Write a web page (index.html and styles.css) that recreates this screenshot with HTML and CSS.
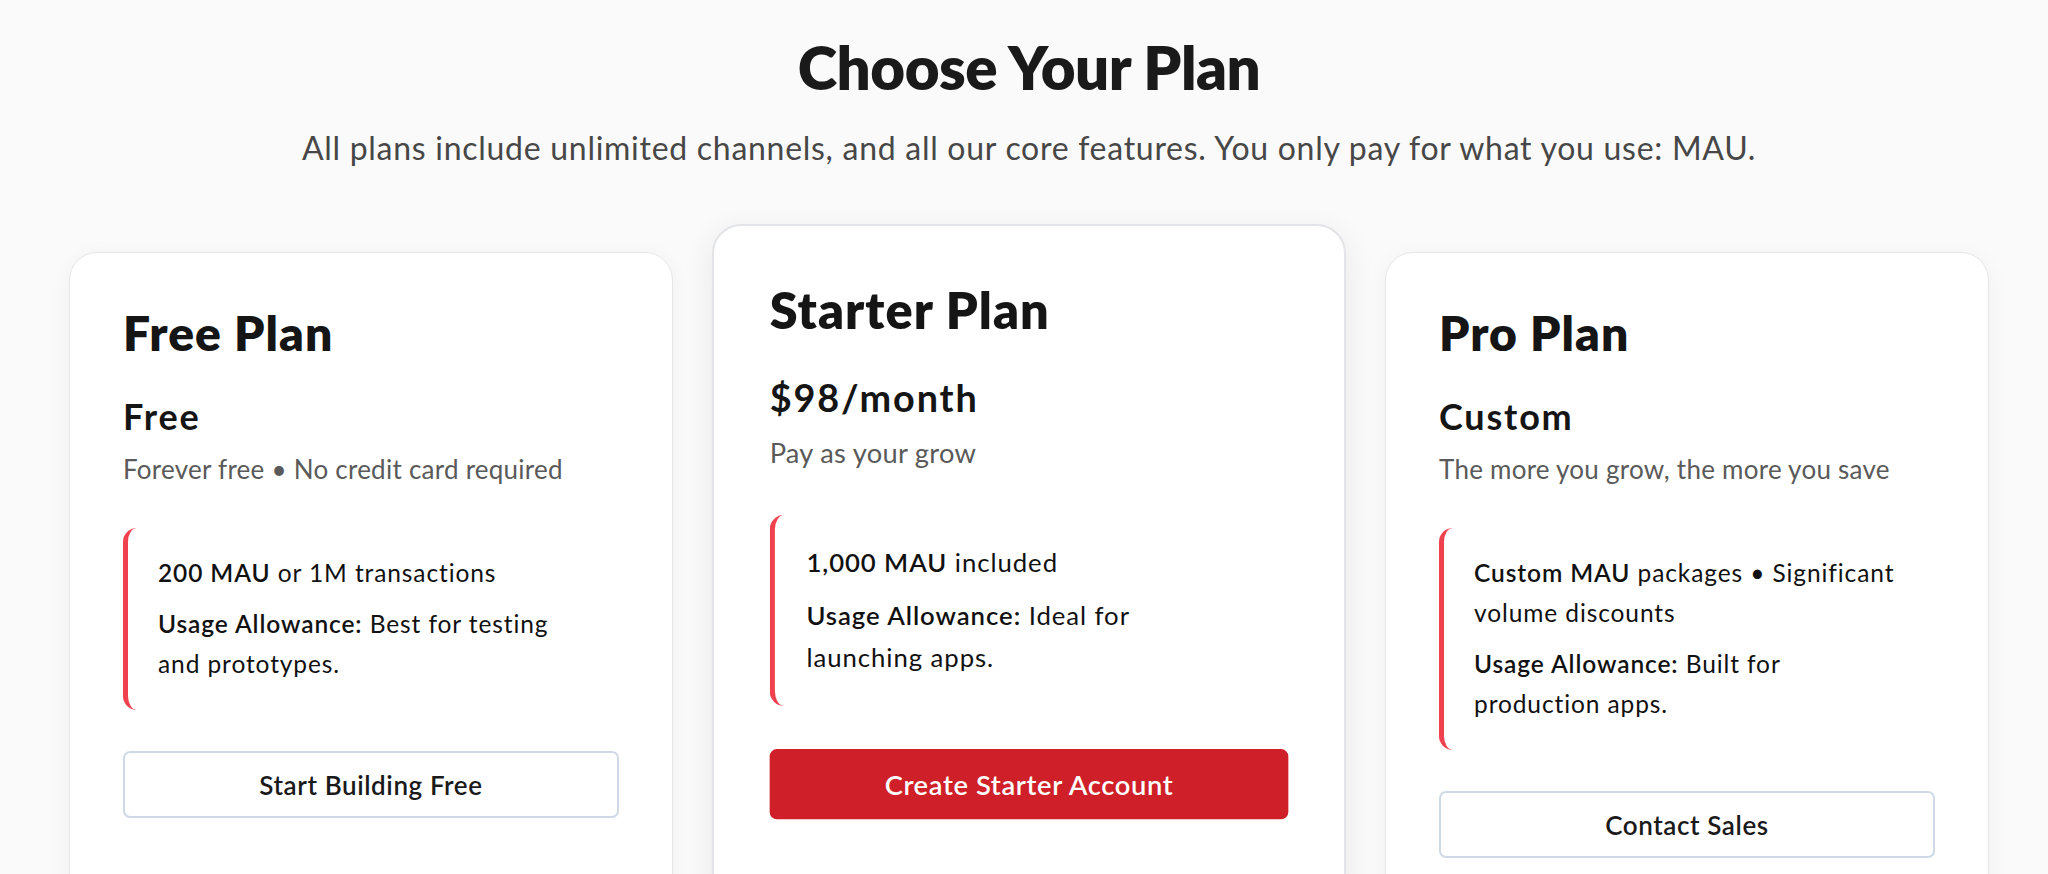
FILE: index.html
```html
<!DOCTYPE html>
<html lang="en">
<head>
<meta charset="utf-8">
<title>Choose Your Plan</title>
<link rel="stylesheet" href="styles.css">
</head>
<body>
<main class="page">
  <header class="intro">
    <h1 class="intro-title">Choose Your Plan</h1>
    <p class="intro-text">All plans include unlimited channels, and all our core features. You only pay for what you use: MAU.</p>
  </header>
  <section class="plans">
    <article class="plan">
      <h2 class="plan-name">Free Plan</h2>
      <div class="plan-price">Free</div>
      <p class="plan-note">Forever free • No credit card required</p>
      <div class="plan-features">
        <p><strong>200 MAU</strong> or 1M transactions</p>
        <p><strong>Usage Allowance:</strong> Best for testing and prototypes.</p>
      </div>
      <button class="plan-btn">Start Building Free</button>
    </article>
    <article class="plan plan-featured">
      <h2 class="plan-name">Starter Plan</h2>
      <div class="plan-price">$98/month</div>
      <p class="plan-note">Pay as your grow</p>
      <div class="plan-features">
        <p><strong>1,000 MAU</strong> included</p>
        <p><strong>Usage Allowance:</strong> Ideal for launching apps.</p>
      </div>
      <button class="plan-btn plan-btn-primary">Create Starter Account</button>
    </article>
    <article class="plan">
      <h2 class="plan-name">Pro Plan</h2>
      <div class="plan-price">Custom</div>
      <p class="plan-note">The more you grow, the more you save</p>
      <div class="plan-features">
        <p><strong>Custom MAU</strong> packages • Significant volume discounts</p>
        <p><strong>Usage Allowance:</strong> Built for production apps.</p>
      </div>
      <button class="plan-btn">Contact Sales</button>
    </article>
  </section>
</main>
</body>
</html>
```
FILE: styles.css
```css
* { box-sizing: border-box; }
html, body { margin: 0; padding: 0; }
body {
  background: #fafafa;
  font-family: "Lato", "Noto Sans", sans-serif;
  color: #141414;
}
.page {
  max-width: 1930px;
  margin: 0 auto;
  padding: 31px 0 0 10px;
}
.intro { text-align: center; }
.intro-title {
  margin: 0;
  font-size: 60px;
  line-height: 72px;
  font-weight: 800;
  letter-spacing: -0.5px;
  color: #1a1a1a;
}
.intro-text {
  margin: 21px 0 0;
  font-size: 32px;
  line-height: 48px;
  font-weight: 400;
  letter-spacing: 0.72px;
  color: #474747;
}
.plans {
  margin-top: 80px;
  display: grid;
  grid-template-columns: repeat(3, 1fr);
  gap: 54px;
}
.plan {
  background: #fff;
  border: 1px solid #e6e6e8;
  border-radius: 28px;
  padding: 51px 53px;
  box-shadow: 0 4px 22px rgba(0, 0, 0, 0.045);
  display: flex;
  flex-direction: column;
  align-items: stretch;
}
.plan-featured {
  transform-origin: top center;
  transform: translateY(-28px) scale(1.05);
  border: 2px solid #e3e4e8;
  box-shadow: 0 8px 30px rgba(0, 0, 0, 0.07);
}
.plan-name {
  margin: 0;
  font-size: 48px;
  line-height: 58px;
  font-weight: 800;
  letter-spacing: 1px;
  color: #151515;
}
.plan-price {
  margin-top: 32px;
  font-size: 36px;
  line-height: 44px;
  font-weight: 700;
  letter-spacing: 1.8px;
  color: #151515;
}
.plan-note {
  margin: 13px 0 0;
  font-size: 26px;
  line-height: 36px;
  letter-spacing: 0.25px;
  color: #5a5a5a;
}
.plan-features {
  margin-top: 41px;
  border-left: 5px solid #f0424e;
  border-radius: 14px;
  padding: 25px 39px 26px 30px;
  display: flex;
  flex-direction: column;
  gap: 11px;
}
.plan-features p {
  margin: 0;
  font-size: 24.5px;
  line-height: 40px;
  letter-spacing: 0.9px;
  color: #111;
}
.plan-features strong { font-weight: 600; }
.plan-btn {
  margin-top: 41px;
  width: 100%;
  height: 67px;
  border: 2px solid #cfd9e5;
  border-radius: 7px;
  background: #fff;
  font-family: inherit;
  font-size: 26px;
  line-height: 36px;
  font-weight: 600;
  letter-spacing: 0.6px;
  color: #1a1a1a;
  padding: 0;
  cursor: pointer;
}
.plan-btn-primary {
  background: #cf1f29;
  border-color: #cf1f29;
  color: #fff;
}
```
